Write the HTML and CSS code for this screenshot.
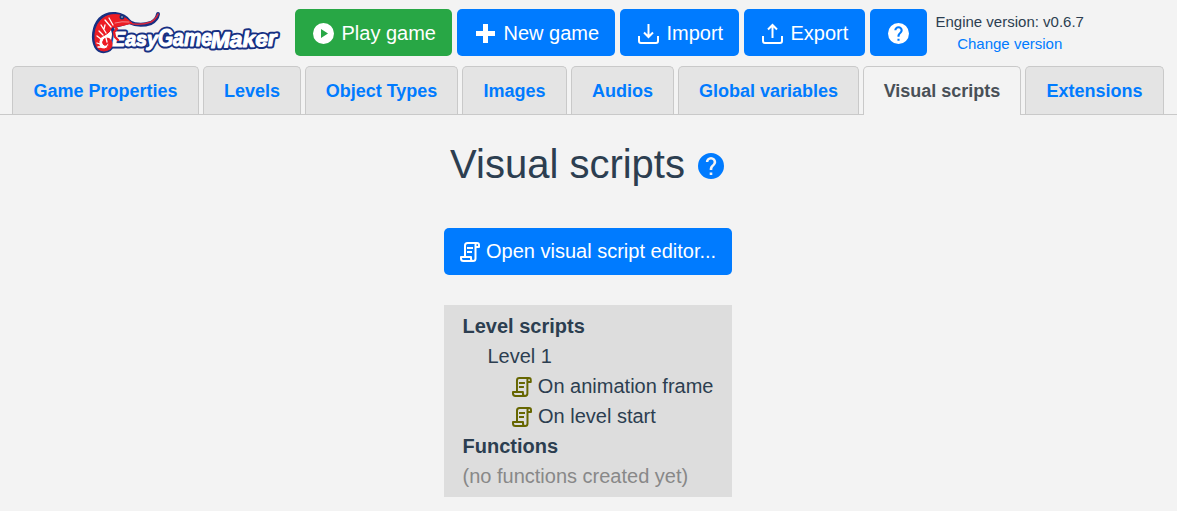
FILE: index.html
```html
<!DOCTYPE html>
<html lang="en">
<head>
<meta charset="utf-8">
<title>EasyGameMaker</title>
<link rel="stylesheet" href="styles.css">
</head>
<body>
<svg class="defs" width="0" height="0">
  <symbol id="help" viewBox="2 2 20 20"><path fill="currentColor" d="M15.07 11.25l-.9.92C13.45 12.89 13 13.5 13 15h-2v-.5c0-1.11.45-2.11 1.17-2.83l1.24-1.26c.37-.36.59-.86.59-1.41a2 2 0 0 0-4 0H8a4 4 0 0 1 8 0c0 .88-.36 1.67-.93 2.25M13 19h-2v-2h2M12 2a10 10 0 1 0 0 20 10 10 0 0 0 0-20z"/></symbol>
  <symbol id="script" viewBox="0 0 20 20"><g fill="none" stroke="currentColor" stroke-width="2" stroke-linejoin="round"><path d="M5 14V3.500Q5 1 7.500 1H17Q19 1 19 3.200V5H15.500V16.500Q15.500 19 13 19H3.500Q1 19 1 16.500V15H11V16.500Q11 19 13 19M15.500 5V3Q15.500 1 17 1"/><path d="M7 6H13M7 10H12"/></g></symbol>
</svg>
<header class="toolbar">
  <svg class="logo" viewBox="0 0 190 46" role="img" aria-label="EasyGameMaker">
    <path class="body-edge" d="M39 13C32 3 17 2 9 10C2 18 1 30 5 38C9 45 19 43 21 37L24 29L21 18z"/>
    <g class="word edge"><text x="21" y="37" font-size="21" textLength="46" lengthAdjust="spacingAndGlyphs">Easy</text><text x="67" y="36.500" font-size="23" textLength="54" lengthAdjust="spacingAndGlyphs">Game</text><text x="120" y="39" font-size="22" textLength="66" lengthAdjust="spacingAndGlyphs" transform="rotate(-2 120 39)">Maker</text></g>
    <g class="word face"><text x="21" y="37" font-size="21" textLength="46" lengthAdjust="spacingAndGlyphs">Easy</text><text x="67" y="36.500" font-size="23" textLength="54" lengthAdjust="spacingAndGlyphs">Game</text><text x="120" y="39" font-size="22" textLength="66" lengthAdjust="spacingAndGlyphs" transform="rotate(-2 120 39)">Maker</text></g>
    <path class="tail-edge" d="M38 13Q48 18 60 14Q66 11 67 5"/>
    <path class="tail" d="M38 14Q48 17 60 13Q65 10 67 5"/>
    <path class="shrimp" d="M41 14Q35 9 29 6Q17 4 10 11Q3 18 4 31Q5 42 13 42Q22 41 21 34Q19 27 13 30Q10 34 13 36Q17 37 16 33Q19 35 16 39Q10 42 8 36Q7 28 14 26Q19 24 21 18Q32 17 41 14z"/>
    <path class="leg" d="M23 17L26 20L23 23L24 28L27 31"/>
    <path class="stripes" d="M14 11L20 18M18 9L22 16M10 16L15 24M8 22L12 26M6 27L10 30M6 34L9 35M14 16L13 20M7 38L11 38M15 29L16 33"/>
    <circle cx="31" cy="8" r="2.500" fill="#173276"/><circle cx="31" cy="8" r="1" fill="#7f91bb"/>
    <path class="jaw" d="M24 14Q31 12 38 13"/>
  </svg>
  <div class="buttons">
    <button class="btn play"><svg viewBox="0 0 21 21"><path fill="currentColor" fill-rule="evenodd" d="M10.500 0a10.500 10.500 0 1 0 0 21 10.500 10.500 0 0 0 0-21M8 6v9l7-4.500z"/></svg><span>Play game</span></button>
    <button class="btn new"><svg viewBox="0 0 21 21"><path d="M10.500 1v19M1 10.500h19" stroke="currentColor" stroke-width="5"/></svg><span>New game</span></button>
    <button class="btn import"><svg viewBox="0 0 21 21"><path class="line" d="M1 13v5q0 2 2 2h15q2 0 2-2v-5M10.500 1v13M6 9.500l4.500 4.500L15 9.500"/></svg><span>Import</span></button>
    <button class="btn export"><svg viewBox="0 0 21 21"><path class="line" d="M1 13v5q0 2 2 2h15q2 0 2-2v-5M10.500 15V2M6 6.500l4.500-4.500L15 6.500"/></svg><span>Export</span></button>
    <button class="btn help" aria-label="Help"><svg><use href="#help"/></svg></button>
  </div>
  <div class="version"><div>Engine version: v0.6.7</div><a>Change version</a></div>
</header>
<nav class="tabs">
  <a class="tab t1">Game Properties</a><a class="tab t2">Levels</a><a class="tab t3">Object Types</a><a class="tab t4">Images</a><a class="tab t5">Audios</a><a class="tab t6">Global variables</a><a class="tab t7 active">Visual scripts</a><a class="tab t8">Extensions</a>
</nav>
<main>
  <h1><span>Visual scripts</span><svg><use href="#help"/></svg></h1>
  <button class="btn open"><svg><use href="#script"/></svg><span>Open visual script editor...</span></button>
  <div class="tree">
    <div class="heading">Level scripts</div>
    <div class="level">Level 1</div>
    <div class="script"><svg><use href="#script"/></svg>On animation frame</div>
    <div class="script"><svg><use href="#script"/></svg>On level start</div>
    <div class="heading">Functions</div>
    <div class="empty">(no functions created yet)</div>
  </div>
</main>
</body>
</html>
```
FILE: styles.css
```css
* { box-sizing: border-box; }
body { margin: 0; background: #f3f3f3; color: #2c3e50; font: 20px/30px "Liberation Sans", Arial, sans-serif; }
.defs { position: absolute; }
.toolbar { display: flex; height: 66px; padding: 9px 0 0 91px; }
.logo { width: 190px; height: 46px; margin-right: 14px; overflow: visible; flex: none; }
.word { font-family: "Liberation Sans", Arial, sans-serif; font-weight: bold; font-style: italic; fill: white; stroke-linejoin: round; }
.edge { stroke: #173083; stroke-width: 5px; }
.face { stroke: #fff; stroke-width: 1.1px; }
.tail-edge, .body-edge, .tail, .leg, .stripes, .jaw { fill: none; stroke-linecap: round; stroke-linejoin: round; }
.tail-edge { stroke: #173083; stroke-width: 4; }
.tail { stroke: #d8283b; stroke-width: 1.6; }
.body-edge { stroke: #173083; stroke-width: 3.5; fill: #fff; }
.shrimp { fill: #ed1c24; stroke: #ed1c24; stroke-width: 1; stroke-linejoin: round; }
.leg { stroke: #ed1c24; stroke-width: 2.4; }
.stripes { stroke: #fff; stroke-width: 1.3; }
.jaw { stroke: #f4858a; stroke-width: 1; }
.line { fill: none; stroke: currentColor; stroke-width: 2; }
.buttons { display: flex; gap: 5px; }
.btn { display: flex; align-items: center; height: 47px; padding: 0 16px; border: 0; border-radius: 5px; background: #007bff; color: #fff; font: inherit; white-space: nowrap; }
.btn svg { width: 21px; height: 21px; flex: none; margin: 2px 7.5px 0 2px; }
.btn span { display: block; }
.play { width: 157px; background: #28a745; }
.new { width: 158px; }
.import { width: 119px; }
.export { width: 121px; }
.help { width: 57px; }
.btn.help svg { margin-right: 0; }
.version { font-size: 15px; line-height: 22px; margin: 2px 0 0 8.5px; text-align: center; white-space: nowrap; }
a { color: #007bff; }
.tabs { display: flex; gap: 4px; height: 49px; padding-left: 12px; border-bottom: 1px solid #c9c9c9; }
.tab { height: 48px; border: 1px solid #c9c9c9; border-bottom: 0; border-radius: 5px 5px 0 0; background: #e4e4e4; font-size: 18px; line-height: 48px; font-weight: bold; text-align: center; white-space: nowrap; }
.tab.active { height: 49px; background: #f3f3f3; color: #495057; }
.t1 { width: 187px; } .t2 { width: 98px; } .t3 { width: 153px; } .t4 { width: 105px; } .t5 { width: 103px; } .t6 { width: 181px; } .t7 { width: 158px; } .t8 { width: 139px; }
main { display: flex; flex-direction: column; align-items: center; padding-right: 1px; }
h1 { display: flex; align-items: center; font-size: 40px; font-weight: normal; line-height: 48px; margin: 25px 2px 40px 0; }
h1 svg { width: 26px; height: 26px; margin: 3px 0 0 13px; color: #007bff; }
.open { width: 288px; }
.btn.open { padding-bottom: 2px; }
.btn.open svg { width: 20px; height: 20px; margin: 2px 6px 0 0; }
.tree { width: 288px; height: 192px; margin-top: 30px; padding: 6px 18.5px; background: #ddd; white-space: nowrap; }
.heading { font-weight: bold; }
.level { padding-left: 25px; }
.script { display: flex; align-items: center; padding-left: 49.5px; }
.script svg { width: 20px; height: 20px; margin: 1px 6px 0 0; color: #666600; }
.empty { color: #888; }
```
